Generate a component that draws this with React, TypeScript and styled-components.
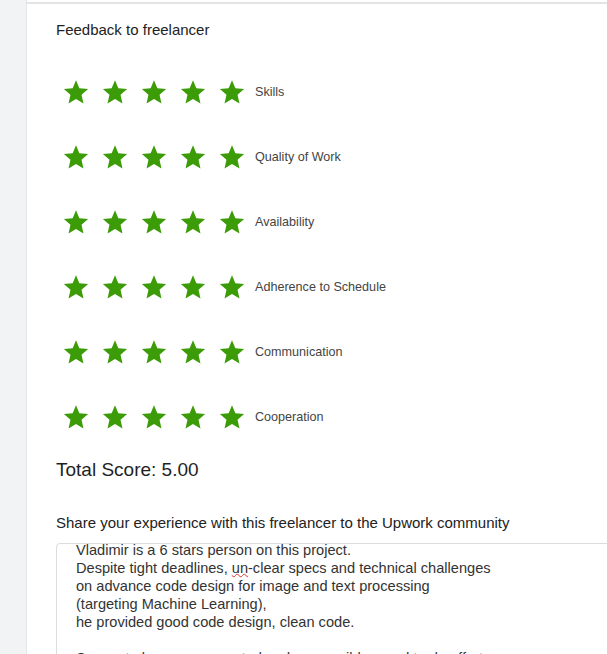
import styled, { createGlobalStyle } from "styled-components";

const GlobalStyle = createGlobalStyle`
  html, body {
    margin: 0;
    padding: 0;
    background: #fff;
    overflow: hidden;
  }
  body {
    font-family: "Liberation Sans", Arial, sans-serif;
  }
`;

const criteria = [
  "Skills",
  "Quality of Work",
  "Availability",
  "Adherence to Schedule",
  "Communication",
  "Cooperation",
];

const review = [
  "Vladimir is a 6 stars person on this project.",
  "Despite tight deadlines, un-clear specs and technical challenges",
  "on advance code design for image and text processing",
  "(targeting Machine Learning),",
  "he provided good code design, clean code.",
  "",
  "Seems to be very commuted and responsible, good to do effort.",
];

const Star = () => (
  <svg width="26" height="26" viewBox="0 0 24 24">
    <polygon
      points="12,1.2 15.1,8.6 23.2,9.3 17.1,14.6 18.9,22.6 12,18.4 5.1,22.6 6.9,14.6 0.8,9.3 8.9,8.6"
      fill="#3b9c07"
    />
  </svg>
);

export default function App() {
  return (
    <Page>
      <GlobalStyle />
      <SideStrip />
      <Card>
        <Heading>Feedback to freelancer</Heading>
        <RatingList>
          {criteria.map((name) => (
            <RatingRow key={name}>
              <Stars>
                {[0, 1, 2, 3, 4].map((i) => (
                  <Star key={i} />
                ))}
              </Stars>
              <Label>{name}</Label>
            </RatingRow>
          ))}
        </RatingList>
        <Total>Total Score: 5.00</Total>
        <Heading $top={32}>
          Share your experience with this freelancer to the Upwork community
        </Heading>
        <TextBox>
          <TextBody>
            {review.map((line, i) =>
              line.includes("un-clear") ? (
                <Line key={i}>
                  Despite tight deadlines, <Squiggle>un</Squiggle>-clear specs
                  and technical challenges
                </Line>
              ) : (
                <Line key={i}>{line || "\u00a0"}</Line>
              )
            )}
          </TextBody>
        </TextBox>
      </Card>
    </Page>
  );
}

const Page = styled.div`
  display: flex;
  width: 607px;
  height: 654px;
  overflow: hidden;
`;
const SideStrip = styled.div`
  flex: 0 0 26px;
  background: #f2f3f5;
  border-right: 1px solid #e3e4e6;
`;
const Card = styled.div`
  flex: 1;
  margin-top: 2px;
  border-top: 2px solid #e4e4e4;
  padding-left: 29px;
  min-width: 0;
`;
const Heading = styled.div<{ $top?: number }>`
  margin-top: ${({ $top }) => $top ?? 17}px;
  font-size: 15px;
  line-height: 18px;
  color: #222;
  white-space: nowrap;
`;
const RatingList = styled.div`
  display: flex;
  flex-direction: column;
  margin-top: 20px;
`;
const RatingRow = styled.div`
  display: flex;
  align-items: center;
  height: 65px;
  padding-left: 7px;
`;
const Stars = styled.div`
  display: flex;
  gap: 13px;
`;
const Label = styled.span`
  margin-left: 10px;
  font-size: 12.6px;
  color: #444;
`;
const Total = styled.div`
  margin-top: 9px;
  font-size: 19px;
  line-height: 24px;
  color: #1f1f1f;
`;
const TextBox = styled.div`
  margin-top: 11px;
  width: 580px;
  height: 120px;
  border: 1px solid #dcdcdc;
  border-radius: 4px 0 0 0;
  padding-left: 19px;
  overflow: hidden;
`;
const TextBody = styled.div`
  margin-top: -3px;
  font-size: 14.6px;
  line-height: 18px;
  color: #333;
`;
const Line = styled.div`
  white-space: nowrap;
`;
const Squiggle = styled.span`
  text-decoration: underline wavy #d33;
  text-decoration-thickness: 1px;
  text-underline-offset: 0;
`;
